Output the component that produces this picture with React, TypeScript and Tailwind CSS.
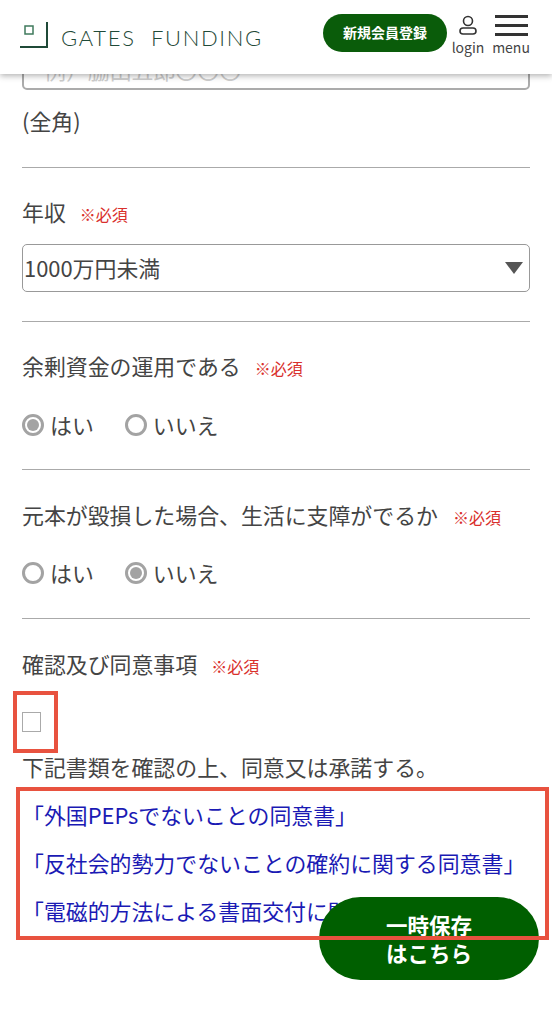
const font = "font-['Noto_Sans_CJK_JP','Noto_Sans',sans-serif]";

function Required() {
    return <span className="mt-[3px] text-[16px] text-[#d9302c]">※必須</span>;
}

function Radio({ label, checked }: { label: string; checked?: boolean }) {
    return (
        <div className="flex items-center gap-[6px]">
            <div className="flex h-[22px] w-[22px] items-center justify-center rounded-full border-[3px] border-[#a3a3a3] bg-white">
                {checked && <div className="h-[12px] w-[12px] rounded-full bg-[#a3a3a3]" />}
            </div>
            <span>{label}</span>
        </div>
    );
}

function Header() {
    return (
        <header className="relative z-10 flex h-[74px] items-center justify-between bg-white pl-[20px] pr-[23px] shadow-[0_2px_6px_rgba(0,0,0,0.3)]">
            <div className="mt-[22px] flex items-start gap-[12px] self-start">
                <svg width="29" height="26" viewBox="0 0 29 26">
                    <rect x="5" y="4" width="8" height="8" fill="none" stroke="#3f7a5c" strokeWidth="1.5" />
                    <path d="M0 25 H27 V0" fill="none" stroke="#1f4a38" strokeWidth="2" />
                </svg>
                <span className="mt-[3px] font-['Lato',sans-serif] text-[22px] leading-[26px] font-light tracking-[0.076em] whitespace-pre text-[#1f4a38]">
                    GATES  FUNDING
                </span>
            </div>
            <div className="-mt-[4px] flex items-start gap-[5px]">
                <button className="-mt-[1px] h-[38px] w-[124px] rounded-full bg-[#0a5c0a] text-[14px] font-bold text-white">
                    新規会員登録
                </button>
                <div className="flex w-[32px] flex-col items-center text-[14px] leading-[18px] text-[#444]">
                    <svg width="20" height="21" viewBox="0 0 20 21" fill="none" stroke="#333" strokeWidth="1.6">
                        <circle cx="10" cy="6" r="4.5" />
                        <path d="M5 13 H15 Q18 13 18 16 Q18 19 15 19 H5 Q2 19 2 16 Q2 13 5 13 Z" />
                    </svg>
                    <span className="mt-[2px]">login</span>
                </div>
                <div className="ml-[4px] flex w-[36px] flex-col items-center text-[14px] leading-[18px] text-[#444]">
                    <div className="flex h-[21px] w-[33px] flex-col justify-between">
                        <div className="h-[3px] bg-[#333]" />
                        <div className="h-[3px] bg-[#333]" />
                        <div className="h-[3px] bg-[#333]" />
                    </div>
                    <span className="mt-[2px]">menu</span>
                </div>
            </div>
        </header>
    );
}

export default function App() {
    return (
        <div className={`relative h-[1024px] w-[552px] overflow-hidden bg-white text-[21.9px] text-[#444] ${font}`}>
            <Header />

            <main className="px-[22px]">
                {/* name field, scrolled mostly under the header */}
                <div className="-mt-[24px] flex h-[40px] w-[508px] items-center rounded-[5px] border-2 border-[#ababab] pl-[20px] text-[#ccc]">
                    例）脇田五郎〇〇〇
                </div>
                <p className="mt-[15px] leading-[32px]">(全角)</p>
                <hr className="mt-[30px] w-[508px] border-[#aaa]" />

                <div className="mt-[28px] flex h-[32px] items-center gap-[14px]">
                    <span>年収</span>
                    <Required />
                </div>
                <div className="mt-[16px] flex h-[48px] w-[508px] items-center justify-between rounded-[5px] border border-[#999] pl-[1px] pr-[6px]">
                    <span>1000万円未満</span>
                    <div className="h-0 w-0 border-x-[9px] border-t-[12px] border-x-transparent border-t-[#555]" />
                </div>
                <hr className="mt-[29px] w-[508px] border-[#aaa]" />

                <div className="mt-[28px] flex h-[32px] items-center gap-[14px]">
                    <span>余剰資金の運用である</span>
                    <Required />
                </div>
                <div className="mt-[27px] flex h-[32px] items-center gap-[31px]">
                    <Radio label="はい" checked />
                    <Radio label="いいえ" />
                </div>
                <hr className="mt-[28px] w-[508px] border-[#aaa]" />

                <div className="mt-[29px] flex h-[32px] items-center gap-[15px]">
                    <span>元本が毀損した場合、生活に支障がでるか</span>
                    <Required />
                </div>
                <div className="mt-[26px] flex h-[32px] items-center gap-[31px]">
                    <Radio label="はい" />
                    <Radio label="いいえ" checked />
                </div>
                <hr className="mt-[29px] w-[508px] border-[#aaa]" />

                <div className="mt-[29px] flex h-[32px] items-center gap-[14px]">
                    <span>確認及び同意事項</span>
                    <Required />
                </div>
                <div className="mt-[32px] h-[20px] w-[19px] border border-[#aaa]" />
                <p className="mt-[19px] leading-[32px]">下記書類を確認の上、同意又は承諾する。</p>

                <div className="mt-[16px] flex flex-col gap-[16px] leading-[32px] text-[#1a1ab4] whitespace-nowrap">
                    <a>「外国PEPsでないことの同意書」</a>
                    <a>「反社会的勢力でないことの確約に関する同意書」</a>
                    <a>「電磁的方法による書面交付に関する同意書」</a>
                </div>
            </main>

            {/* floating save button */}
            <button className="absolute left-[319px] top-[897px] z-10 flex h-[83px] w-[220px] items-center justify-center rounded-full bg-[#005f00] text-[21.5px] leading-[28px] font-bold text-white">
                一時保存
                <br />
                はこちら
            </button>

            {/* red annotation boxes drawn over the screenshot */}
            <div className="absolute left-[13px] top-[691px] z-20 h-[62px] w-[45px] border-[4px] border-[#e8523f]" />
            <div className="absolute left-[16px] top-[787px] z-20 h-[153px] w-[533px] border-[4px] border-[#e8523f]" />
        </div>
    );
}
